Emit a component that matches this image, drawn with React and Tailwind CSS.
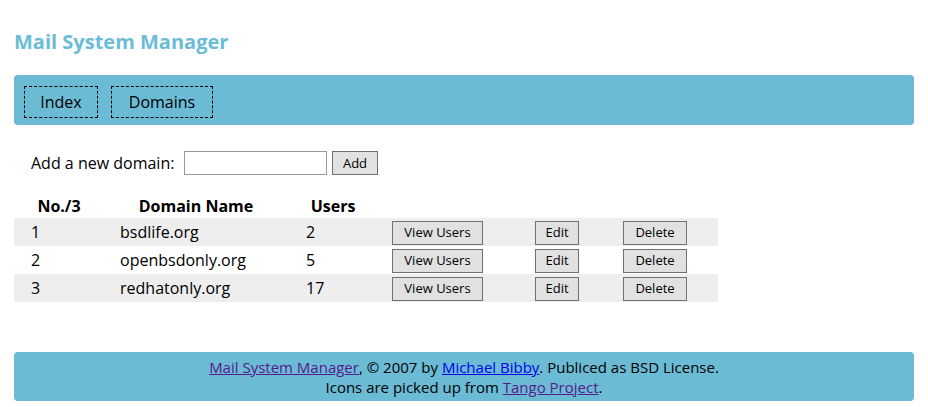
import React from "react";

const rows = [
  { n: 1, d: "bsdlife.org", u: 2, bg: "bg-[#eeeeee]" },
  { n: 2, d: "openbsdonly.org", u: 5, bg: "bg-white" },
  { n: 3, d: "redhatonly.org", u: 17, bg: "bg-[#eeeeee]" },
];

function Btn({ w, children }) {
  return (
    <button
      className={`${w} h-[24px] border border-[#707070] bg-[#e1e1e1] text-[13px] leading-none text-black`}
    >
      {children}
    </button>
  );
}

export default function App() {
  return (
    <div
      className="w-[928px] h-[407px] bg-white text-black overflow-hidden"
      style={{ fontFamily: '"Open Sans", "Noto Sans", sans-serif' }}
    >
      <h1 className="pl-[14px] pt-[29px] h-[75px] text-[20px] font-bold leading-[26px] text-[#6bbcd6]">
        Mail System Manager
      </h1>
      <div className="mx-[14px] h-[50px] rounded-[4px] bg-[#6bbbd5] flex gap-[13px] pl-[10px] pt-[11px]">
        <div className="w-[74px] h-[32px] border border-dashed border-black flex items-center justify-center text-[16px]">
          Index
        </div>
        <div className="w-[102px] h-[32px] border border-dashed border-black flex items-center justify-center text-[16px]">
          Domains
        </div>
      </div>
      <div className="pl-[31px] pt-[25px] flex items-center h-[50px] text-[16px]">
        <span className="w-[153px]">Add a new domain:</span>
        <input className="w-[143px] h-[24px] border border-[#999999] bg-white outline-none" />
        <div className="ml-[5px]">
          <Btn w="w-[46px]">Add</Btn>
        </div>
      </div>
      <div className="ml-[14px] w-[704px] mt-[18px] text-[16px]">
        <div className="flex h-[25px] items-center font-bold">
          <div className="w-[90px] text-center">No./3</div>
          <div className="w-[184px] text-center">Domain Name</div>
          <div className="w-[90px] text-center">Users</div>
        </div>
        {rows.map((r) => (
          <div key={r.n} className={`flex h-[28px] items-center ${r.bg}`}>
            <div className="w-[90px] pl-[17px]">{r.n}</div>
            <div className="w-[184px] pl-[16px]">{r.d}</div>
            <div className="w-[90px] pl-[18px]">{r.u}</div>
            <div className="w-[143px] pl-[14px]">
              <Btn w="w-[91px]">View Users</Btn>
            </div>
            <div className="w-[88px] pl-[14px]">
              <Btn w="w-[44px]">Edit</Btn>
            </div>
            <div className="w-[109px] pl-[14px]">
              <Btn w="w-[64px]">Delete</Btn>
            </div>
          </div>
        ))}
      </div>
      <div className="mx-[14px] mt-[50px] h-[49px] rounded-[4px] bg-[#6bbbd5] flex flex-col items-center justify-center text-[15px] leading-[20px]">
        <div>
          <a href="#" className="underline text-[#551a8b]">Mail System Manager</a>, © 2007 by{" "}
          <a href="#" className="underline text-[#0000ee]">Michael Bibby</a>. Publiced as BSD License.
        </div>
        <div>
          Icons are picked up from <a href="#" className="underline text-[#551a8b]">Tango Project</a>.
        </div>
      </div>
    </div>
  );
}
